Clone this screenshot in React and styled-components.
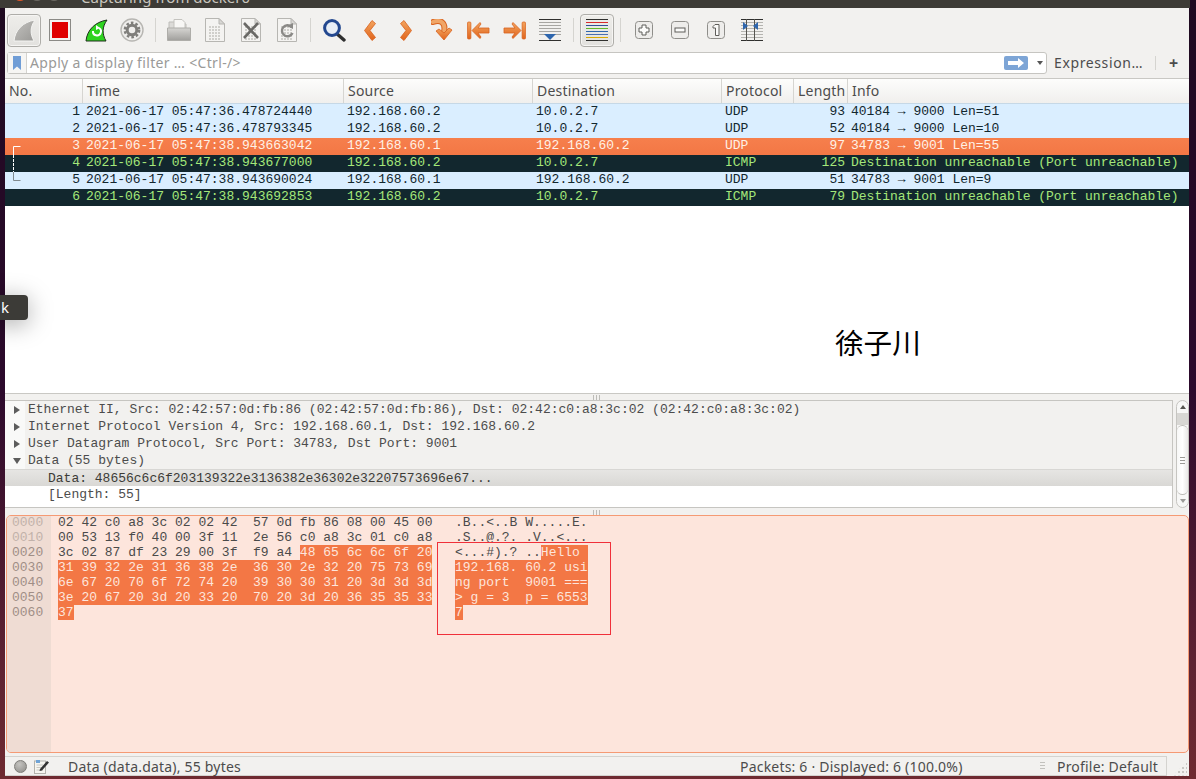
import React from 'react'
import styled, { createGlobalStyle, css } from 'styled-components'

const GlobalStyle = createGlobalStyle`
  html, body {
    margin: 0;
    padding: 0;
    overflow: hidden;
  }
`

const UI_FONT = `"Noto Sans", "Open Sans", sans-serif`
const MONO_FONT = `"Liberation Mono", "DejaVu Sans Mono", monospace`
const COLUMNS = '78px 261px 189px 189px 72px 54px 1fr'

const Desktop = styled.div`
  position: relative;
  width: 1196px;
  height: 779px;
  overflow: hidden;
  background: linear-gradient(180deg, #1e0a20 0%, #2c0a2c 50%, #5e2232 85%, #6e2a30 100%);
`

const TitleBar = styled.div`
  display: flex;
  align-items: flex-end;
  width: 1190px;
  height: 8px;
  overflow: hidden;
  background: #3d3b36;
`

const TitleInner = styled.div`
  display: flex;
  align-items: center;
  height: 20px;
  margin-bottom: 1px;
  padding-left: 13px;
  flex-shrink: 0;
`

const WinDot = styled.span`
  width: 14px;
  height: 14px;
  margin-right: 3px;
  margin-bottom: 6px;
  border-radius: 50%;
  background: ${p => (p.$close ? '#e2572a' : '#6b6963')};
`

const TitleText = styled.span`
  margin-left: 17px;
  font: 15px ${UI_FONT};
  color: #c9c6bf;
`

const Window = styled.div`
  display: flex;
  flex-direction: column;
  width: 1184px;
  height: 768px;
  margin-left: 5px;
  background: #f2f1ef;
  font-family: ${UI_FONT};
`

const Toolbar = styled.div`
  display: flex;
  align-items: center;
  gap: 2px;
  height: 44px;
  padding-left: 2px;
  flex-shrink: 0;
`

const ToolButton = styled.div`
  display: flex;
  align-items: center;
  justify-content: center;
  width: 34px;
  height: 33px;
  box-sizing: border-box;
  border-radius: 4px;
  ${p => p.$on && css`
    border: 1px solid #aeada9;
    background: linear-gradient(180deg, #eeedea, #e2e1de);
    box-shadow: inset 0 0 0 1px #f6f5f3;
  `}
`

const ToolSep = styled.div`
  width: 9px;
  height: 24px;
  background: linear-gradient(#d5d4d0, #d5d4d0) center / 1px 100% no-repeat;
`

const FilterRow = styled.div`
  display: flex;
  align-items: center;
  height: 22px;
  padding-left: 2px;
  flex-shrink: 0;
`

const FilterBox = styled.div`
  display: flex;
  align-items: center;
  width: 1040px;
  height: 22px;
  box-sizing: border-box;
  border: 1px solid #c6c5c1;
  border-radius: 3px;
  background: #fff;
`

const Bookmark = styled.div`
  display: flex;
  align-items: center;
  justify-content: center;
  width: 18px;
  height: 100%;
  border-right: 1px solid #d4d3cf;
  background: #f6f5f3;
`

const FilterHint = styled.span`
  flex: 1;
  padding: 0 0 2px 3px;
  font-size: 14px;
  letter-spacing: 0.33px;
  color: #9a9a98;
  white-space: nowrap;
`

const ApplyButton = styled.div`
  display: flex;
  align-items: center;
  justify-content: center;
  width: 24px;
  height: 14px;
  border-radius: 2px;
  background: #7da5d6;
`

const DropCaret = styled.span`
  width: 0;
  height: 0;
  margin: 0 3px 0 9px;
  border-left: 3.5px solid transparent;
  border-right: 3.5px solid transparent;
  border-top: 4px solid #555;
`

const ExpressionLabel = styled.span`
  width: 100px;
  margin-left: 7px;
  padding-bottom: 2px;
  font-size: 14px;
  letter-spacing: 0.62px;
  color: #4c4c4c;
  white-space: nowrap;
`

const FilterSep = styled.span`
  width: 1px;
  height: 14px;
  margin-left: 1px;
  background: #d5d4d0;
`

const PlusLabel = styled.span`
  margin-left: 13px;
  font-size: 16px;
  font-weight: 700;
  line-height: 1;
  color: #4c4c4c;
`

const PacketPane = styled.div`
  display: flex;
  flex-direction: column;
  height: 315px;
  margin-top: 4px;
  box-sizing: border-box;
  border-top: 1px solid #c9c8c4;
  background: #fff;
  flex-shrink: 0;
`

const HeaderRow = styled.div`
  display: grid;
  grid-template-columns: ${COLUMNS};
  height: 25px;
  box-sizing: border-box;
  border-bottom: 1px solid #c6d8e6;
  background: linear-gradient(180deg, #fdfdfc, #f0efed);
  flex-shrink: 0;
`

const HeaderCell = styled.div`
  padding: 1px 0 0 4px;
  border-right: 1px solid #d6d5d1;
  font-size: 14px;
  letter-spacing: 0.2px;
  line-height: 22px;
  color: #4c4c4c;
  overflow: hidden;
  white-space: nowrap;
  &:last-child {
    border-right: 0;
  }
`

const rowThemes = {
  plain: css`
    background: #daeeff;
    color: #12272e;
  `,
  error: css`
    background: linear-gradient(180deg, #f67f4c, #f37745);
    color: #fff1e6;
  `,
  dark: css`
    background: #12272e;
    color: #a5e87a;
  `
}

const PacketRow = styled.div`
  position: relative;
  display: grid;
  grid-template-columns: ${COLUMNS};
  height: 17px;
  font: 13px/15px ${MONO_FONT};
  white-space: pre;
  ${p => rowThemes[p.$kind]}
`

const Cell = styled.div`
  padding: 0 3px;
  overflow: hidden;
  text-align: ${p => (p.$right ? 'right' : 'left')};
`

const NoCell = styled(Cell)`
  padding: 0 3px 0 0;
  text-align: right;
`

const Relation = styled.svg`
  position: absolute;
  left: 8px;
  top: 0;
`

const Splitter = styled.div`
  display: flex;
  align-items: center;
  justify-content: center;
  height: 7px;
  flex-shrink: 0;
  border-top: 1px solid ${p => (p.$line ? '#c9c8c4' : 'transparent')};
  box-sizing: border-box;
`

const Grip = styled.span`
  width: 8px;
  height: 5px;
  background: repeating-linear-gradient(90deg, #bdbcb8 0 1px, transparent 1px 3px);
`

const TreeWrap = styled.div`
  display: flex;
  height: 108px;
  flex-shrink: 0;
`

const TreePane = styled.div`
  display: flex;
  flex-direction: column;
  width: 1169px;
  box-sizing: border-box;
  border: 1px solid #c6c5c1;
  border-left: 0;
  background: #fff;
  font: 13px/17px ${MONO_FONT};
  white-space: pre;
`

const TreeRow = styled.div`
  display: flex;
  align-items: center;
  height: 17px;
  flex-shrink: 0;
  color: #4c4c4c;
  background: linear-gradient(90deg, #f9f9f8 20px, #f2f1ef 20px);
  ${p => p.$selected && css`
    background: linear-gradient(180deg, #e6e5e3, #d9d8d5);
    color: #3c3b37;
    border-top: 1px solid #d8d7d4;
    box-sizing: border-box;
  `}
  ${p => p.$fill && css`
    flex: 1;
    align-items: flex-start;
    background: #fff;
  `}
`

const Caret = styled.span`
  display: block;
  width: 0;
  height: 0;
  margin-left: 9px;
  ${p => p.$open ? css`
    margin-left: 8px;
    margin-right: 7px;
    border-left: 4px solid transparent;
    border-right: 4px solid transparent;
    border-top: 6px solid #5c5c5c;
  ` : css`
    margin-right: 8px;
    border-top: 4px solid transparent;
    border-bottom: 4px solid transparent;
    border-left: 6px solid #5c5c5c;
  `}
`

const TreeChild = styled.span`
  padding-left: 43px;
`

const Scrollbar = styled.div`
  display: flex;
  flex-direction: column;
  align-items: center;
  width: 13px;
  margin-left: 3px;
  box-sizing: border-box;
  border: 1px solid #c6c5c1;
  border-radius: 7px;
  background: #f7f7f6;
  overflow: hidden;
`

const ArrowSlot = styled.div`
  display: flex;
  align-items: center;
  justify-content: center;
  height: ${p => p.$h}px;
  flex-shrink: 0;
`

const ScrollTriangle = styled.span`
  width: 0;
  height: 0;
  border-left: 3px solid transparent;
  border-right: 3px solid transparent;
  ${p => p.$down
    ? 'border-top: 4px solid #9b9b98;'
    : 'border-bottom: 4px solid #55544f;'}
`

const ScrollGutter = styled.div`
  width: 100%;
  height: 12px;
  flex-shrink: 0;
  background: #d8d7d4;
`

const ScrollThumb = styled.div`
  display: flex;
  align-items: center;
  justify-content: center;
  width: 100%;
  height: 70px;
  box-sizing: border-box;
  flex-shrink: 0;
  border: 1px solid #bcbbb7;
  border-left: 0;
  border-right: 0;
  border-radius: 6px;
  background: linear-gradient(90deg, #f7f7f6, #fff 50%, #e9e8e6);
`

const ThumbGrip = styled.span`
  width: 5px;
  height: 7px;
  background: repeating-linear-gradient(180deg, #9b9a96 0 1px, transparent 1px 3px);
`

const HexPane = styled.div`
  display: flex;
  height: 238px;
  margin-left: 1px;
  box-sizing: border-box;
  border: 1px solid #f59a74;
  border-radius: 5px;
  background: #fde5dc;
  overflow: hidden;
  font: 13px/15px ${MONO_FONT};
  white-space: pre;
  flex-shrink: 0;
`

const OffsetColumn = styled.div`
  width: 44px;
  padding-left: 5px;
  box-sizing: border-box;
  background: #efdcd3;
  flex-shrink: 0;
`

const OffsetLine = styled.div`
  height: 15px;
  margin-top: ${p => (p.$first ? '-1px' : 0)};
  color: ${p => (p.$dim ? '#c2b2aa' : '#a08e86')};
`

const HexColumn = styled.div`
  flex: 1;
  padding-left: 7px;
  margin-top: -1px;
  color: #4a4a4a;
`

const HexLine = styled.div`
  display: grid;
  grid-template-columns: 397px 1fr;
  height: 15px;
`

const Marked = styled.span`
  background: #f37745;
  color: #fde5dc;
`

const StatusBar = styled.div`
  display: flex;
  align-items: center;
  height: 20px;
  margin-top: 3px;
  flex-shrink: 0;
`

const StatusFrame = styled.div`
  display: flex;
  align-items: center;
  width: 1162px;
  height: 100%;
  box-sizing: border-box;
  border: 1px solid #d4d3cf;
  border-left: 0;
  font-size: 14px;
  letter-spacing: 0.2px;
  color: #4c4c4c;
  white-space: nowrap;
`

const Led = styled.span`
  width: 13px;
  height: 13px;
  margin-left: 9px;
  box-sizing: border-box;
  border: 1px solid #7e7d79;
  border-radius: 50%;
  background: radial-gradient(circle at 40% 30%, #c4c3c0, #8d8c88);
`

const NoteSlot = styled.span`
  display: flex;
  margin-left: 7px;
`

const StatusText = styled.span`
  width: ${p => p.$w}px;
  margin-left: ${p => p.$ml || 0}px;
`

const StatusGrip = styled.span`
  width: 5px;
  height: 8px;
  margin-left: 76px;
  margin-right: 12px;
  background: repeating-linear-gradient(180deg, #c2c1bd 0 1px, transparent 1px 3px);
`

const ResizeCorner = styled.span`
  width: 14px;
  height: 14px;
  margin: 5px 0 0 6px;
  background: radial-gradient(circle, #c9c8c4 1px, transparent 1.2px) 0 0 / 4px 4px;
  clip-path: polygon(100% 0, 100% 100%, 0 100%);
`

// things lying over the window
const Tooltip = styled.div`
  position: absolute;
  left: -8px;
  top: 295px;
  width: 36px;
  height: 25px;
  box-sizing: border-box;
  padding-left: 9px;
  border-radius: 4px;
  background: #3c3b37;
  color: #fff;
  font: 15px/24px ${UI_FONT};
  box-shadow: 0 4px 24px rgba(0, 0, 0, 0.35);
`

const SignName = styled.div`
  position: absolute;
  left: 835px;
  top: 322px;
  font: 28.6px/40px "Noto Sans CJK SC", sans-serif;
  color: #000;
`

const RedBox = styled.div`
  position: absolute;
  left: 437px;
  top: 542px;
  width: 174px;
  height: 93px;
  box-sizing: border-box;
  border: 1px solid #f0303a;
`

const Defs = styled.svg`
  position: absolute;
  width: 0;
  height: 0;
`

const GradientDefs = () => (
  <Defs>
    <defs>
      <linearGradient id="orange" x1="0" y1="0" x2="0" y2="1">
        <stop offset="0" stopColor="#f3a45e" />
        <stop offset="1" stopColor="#e0641c" />
      </linearGradient>
      <linearGradient id="fin" x1="0" y1="0" x2="1" y2="1">
        <stop offset="0" stopColor="#c4c3c0" />
        <stop offset="1" stopColor="#999895" />
      </linearGradient>
      <linearGradient id="folder" x1="0" y1="0" x2="0" y2="1">
        <stop offset="0" stopColor="#d6d5d2" />
        <stop offset="1" stopColor="#a09f9c" />
      </linearGradient>
    </defs>
  </Defs>
)

const FIN = 'M2 23 C3 12 11 4 23 2 C18 9 18 16 22 23 Z'

const SharkIcon = () => (
  <svg width="24" height="24" viewBox="0 0 24 24">
    <path d={FIN} fill="url(#fin)" stroke="#f4f4f2" strokeWidth="1" />
  </svg>
)

const StopIcon = () => (
  <svg width="22" height="22" viewBox="0 0 22 22">
    <rect x="0.5" y="0.5" width="21" height="21" fill="#f4f3f1" stroke="#8b8a86" />
    <rect x="3" y="3" width="16" height="16" fill="#e00000" />
  </svg>
)

const RestartIcon = () => (
  <svg width="24" height="24" viewBox="0 0 24 24">
    <path d={FIN} fill="#2ed320" stroke="#20301c" strokeWidth="1" />
    <path d="M9 13 A4 4 0 1 0 15 10" fill="none" stroke="#fff" strokeWidth="2" />
    <path d="M12 7 L16 10 L12 12 Z" fill="#fff" />
  </svg>
)

const GearIcon = () => (
  <svg width="24" height="24" viewBox="0 0 24 24">
    <circle cx="12" cy="12" r="11" fill="#efeeec" stroke="#b7b6b2" strokeWidth="1.4" />
    <circle cx="12" cy="12" r="7.2" fill="none" stroke="#7f7e7b" strokeWidth="2.4" strokeDasharray="2.6 2.05" />
    <circle cx="12" cy="12" r="4.8" fill="none" stroke="#7f7e7b" strokeWidth="3" />
  </svg>
)

const FolderIcon = () => (
  <svg width="24" height="22" viewBox="0 0 24 22">
    <path d="M2 3 H8 L10 5 H19 V12 H2 Z" fill="#dcdbd8" stroke="#bdbcb8" />
    <path d="M7 0.5 H15 L18 3.5 V11 H7 Z" fill="#f8f7f5" stroke="#c4c3bf" />
    <path d="M0.5 9 H23.5 V21.5 H0.5 Z" fill="url(#folder)" stroke="#aeada9" />
  </svg>
)

const Sheet = ({ children }) => (
  <svg width="20" height="24" viewBox="0 0 20 24">
    <path d="M0.5 0.5 H14 L19.5 6 V23.5 H0.5 Z" fill="#f4f3f1" stroke="#b7b6b2" />
    <path d="M14 0.5 V6 H19.5 Z" fill="#d8d7d4" stroke="#b7b6b2" />
    <path d="M4 9 H16 M4 12 H16 M4 15 H16 M4 18 H16 M4 21 H16" stroke="#c4c3bf" strokeWidth="1.5" strokeDasharray="2 1" />
    {children}
  </svg>
)

const FileIcon = () => <Sheet />

const CloseFileIcon = () => (
  <Sheet>
    <path d="M3 5 L17 20 M17 5 L3 20" stroke="#6a6966" strokeWidth="2.6" />
  </Sheet>
)

const ReloadFileIcon = () => (
  <Sheet>
    <path d="M14.5 9 A5.5 5.5 0 1 0 15.5 15" fill="none" stroke="#8a8986" strokeWidth="2.4" />
    <path d="M10 8 L16 5 L16 11 Z" fill="#8a8986" />
  </Sheet>
)

const SearchIcon = () => (
  <svg width="24" height="24" viewBox="0 0 24 24">
    <path d="M14 15 L22 22" stroke="#2f2f2f" strokeWidth="3.4" strokeLinecap="round" />
    <circle cx="10" cy="10" r="7.4" fill="#e8eef6" stroke="#23488f" strokeWidth="3" />
  </svg>
)

const ChevronLeft = () => (
  <svg width="12" height="21" viewBox="0 0 12 21">
    <path d="M8 0.5 L11.5 3.5 L6 10.5 L11.5 17.5 L8 20.5 L0.5 10.5 Z" fill="url(#orange)" stroke="#d8621e" strokeWidth="0.8" />
  </svg>
)

const ChevronRight = () => (
  <svg width="12" height="21" viewBox="0 0 12 21">
    <path d="M4 0.5 L0.5 3.5 L6 10.5 L0.5 17.5 L4 20.5 L11.5 10.5 Z" fill="url(#orange)" stroke="#d8621e" strokeWidth="0.8" />
  </svg>
)

const GoToIcon = () => (
  <svg width="22" height="22" viewBox="0 0 22 22">
    <path d="M2 3 C10 0 15 4 13 13" fill="none" stroke="#d8621e" strokeWidth="6" strokeLinecap="round" />
    <path d="M2 3 C10 0 15 4 13 13" fill="none" stroke="#f0a566" strokeWidth="4" strokeLinecap="round" />
    <path d="M5 12 L8 10 L13 14 L18 9 L21 11 L13 21 Z" fill="url(#orange)" stroke="#d8621e" strokeWidth="0.8" />
  </svg>
)

const FirstIcon = () => (
  <svg width="23" height="19" viewBox="0 0 23 19">
    <rect x="0.5" y="1" width="3.4" height="17" rx="1" fill="url(#orange)" stroke="#d8621e" strokeWidth="0.7" />
    <path d="M5 9.5 L13 1.5 L14 3 L11 7 H22 V12 H11 L14 16 L13 17.5 Z" fill="url(#orange)" stroke="#d8621e" strokeWidth="0.8" />
  </svg>
)

const LastIcon = () => (
  <svg width="23" height="19" viewBox="0 0 23 19">
    <rect x="19.1" y="1" width="3.4" height="17" rx="1" fill="url(#orange)" stroke="#d8621e" strokeWidth="0.7" />
    <path d="M18 9.5 L10 1.5 L9 3 L12 7 H1 V12 H12 L9 16 L10 17.5 Z" fill="url(#orange)" stroke="#d8621e" strokeWidth="0.8" />
  </svg>
)

const AutoScrollIcon = () => (
  <svg width="22" height="22" viewBox="0 0 22 22">
    <path d="M0 0.5 H22 M0 21.5 H22" stroke="#30302e" />
    <path d="M0 3.5 H22 M0 6.5 H22 M0 9.5 H22 M0 12.5 H22 M0 15.5 H22" stroke="#a7a6a2" />
    <path d="M5 15 H17 L11 21 Z" fill="#2f66ad" />
  </svg>
)

const ColorizeIcon = () => (
  <svg width="22" height="22" viewBox="0 0 22 22">
    <path d="M0 0.5 H22" stroke="#30302e" />
    <path d="M0 3.5 H22" stroke="#d82b2b" />
    <path d="M0 6.5 H22" stroke="#34509a" />
    <path d="M0 9.5 H22" stroke="#62b82c" />
    <path d="M0 12.5 H22" stroke="#2f66ad" />
    <path d="M0 15.5 H22" stroke="#4a6fb0" />
    <path d="M0 18.5 H22" stroke="#d9a800" />
    <path d="M0 21.5 H22" stroke="#30302e" />
  </svg>
)

const ZoomFrame = ({ children }) => (
  <svg width="18" height="18" viewBox="0 0 18 18">
    <rect x="0.5" y="0.5" width="17" height="17" rx="3" fill="#eeedeb" stroke="#8f8e8a" />
    {children}
  </svg>
)

const ZoomInIcon = () => (
  <ZoomFrame>
    <path d="M7 4 H11 V7 H14 V11 H11 V14 H7 V11 H4 V7 H7 Z" fill="#fbfbfa" stroke="#5f5e5a" />
  </ZoomFrame>
)

const ZoomOutIcon = () => (
  <ZoomFrame>
    <rect x="4" y="7" width="10" height="4" fill="#fbfbfa" stroke="#5f5e5a" />
  </ZoomFrame>
)

const ZoomNormalIcon = () => (
  <ZoomFrame>
    <path d="M8 3.5 H12 V14.5 H8.5 V7 H6 V5.5 Z" fill="#fbfbfa" stroke="#5f5e5a" />
  </ZoomFrame>
)

const ResizeColumnsIcon = () => (
  <svg width="22" height="22" viewBox="0 0 22 22">
    <path d="M0 0.5 H22 M0 21.5 H22" stroke="#30302e" />
    <path d="M0 3.5 H22 M0 6.5 H22 M0 9.5 H22 M0 12.5 H22 M0 15.5 H22 M0 18.5 H22" stroke="#b5b4b0" />
    <path d="M5.5 0 V22 M13.5 0 V22" stroke="#55544f" />
    <path d="M2 3 L7 7 L2 11 Z M17 3 L12 7 L17 11 Z" fill="#2f66ad" />
  </svg>
)

const BookmarkIcon = () => (
  <svg width="8" height="14" viewBox="0 0 8 14">
    <path d="M0 0 H8 V14 L4 10.5 L0 14 Z" fill="#709dd6" />
  </svg>
)

const ApplyArrow = () => (
  <svg width="16" height="10" viewBox="0 0 16 10">
    <path d="M0 3 H10 V0 L16 5 L10 10 V7 H0 Z" fill="#fff" />
  </svg>
)

const NoteIcon = () => (
  <svg width="15" height="15" viewBox="0 0 15 15">
    <rect x="0.5" y="2" width="11" height="12.5" fill="#f6f5f0" stroke="#b4b3ad" />
    <path d="M2.5 6 H9 M2.5 8.5 H9 M2.5 11 H9" stroke="#c9c8c2" />
    <path d="M6 10 L13 2 L15 3.5 L8 11.5 L5.5 12 Z" fill="#333" />
    <rect x="2" y="1" width="4" height="3" fill="#6fa3d6" />
  </svg>
)

const RelationTop = () => (
  <Relation width="10" height="17" viewBox="0 0 10 17">
    <path d="M7.5 8.5 H0.5 V17" fill="none" stroke="#fff" />
  </Relation>
)

const RelationMiddle = () => (
  <Relation width="10" height="17" viewBox="0 0 10 17">
    <path d="M0.5 0 V17" fill="none" stroke="#fff" strokeDasharray="3 1" />
  </Relation>
)

const RelationBottom = () => (
  <Relation width="10" height="17" viewBox="0 0 10 17">
    <path d="M0.5 0 V8.5 H7.5" fill="none" stroke="#808a90" />
  </Relation>
)

const packets = [
  { no: 1, time: '2021-06-17 05:47:36.478724440', src: '192.168.60.2', dst: '10.0.2.7', proto: 'UDP', len: 93, info: '40184 → 9000 Len=51', kind: 'plain' },
  { no: 2, time: '2021-06-17 05:47:36.478793345', src: '192.168.60.2', dst: '10.0.2.7', proto: 'UDP', len: 52, info: '40184 → 9000 Len=10', kind: 'plain' },
  { no: 3, time: '2021-06-17 05:47:38.943663042', src: '192.168.60.1', dst: '192.168.60.2', proto: 'UDP', len: 97, info: '34783 → 9001 Len=55', kind: 'error', relation: <RelationTop /> },
  { no: 4, time: '2021-06-17 05:47:38.943677000', src: '192.168.60.2', dst: '10.0.2.7', proto: 'ICMP', len: 125, info: 'Destination unreachable (Port unreachable)', kind: 'dark', relation: <RelationMiddle /> },
  { no: 5, time: '2021-06-17 05:47:38.943690024', src: '192.168.60.1', dst: '192.168.60.2', proto: 'UDP', len: 51, info: '34783 → 9001 Len=9', kind: 'plain', relation: <RelationBottom /> },
  { no: 6, time: '2021-06-17 05:47:38.943692853', src: '192.168.60.2', dst: '10.0.2.7', proto: 'ICMP', len: 79, info: 'Destination unreachable (Port unreachable)', kind: 'dark' }
]

const headers = ['No.', 'Time', 'Source', 'Destination', 'Protocol', 'Length', 'Info']

const treeRows = [
  'Ethernet II, Src: 02:42:57:0d:fb:86 (02:42:57:0d:fb:86), Dst: 02:42:c0:a8:3c:02 (02:42:c0:a8:3c:02)',
  'Internet Protocol Version 4, Src: 192.168.60.1, Dst: 192.168.60.2',
  'User Datagram Protocol, Src Port: 34783, Dst Port: 9001'
]

const offsets = ['0000', '0010', '0020', '0030', '0040', '0050', '0060']

function App() {
  return (
    <Desktop>
      <GlobalStyle />
      <GradientDefs />
      <TitleBar>
        <TitleInner>
          <WinDot $close />
          <WinDot />
          <WinDot />
          <TitleText>Capturing from docker0</TitleText>
        </TitleInner>
      </TitleBar>
      <Window>
        <Toolbar>
          <ToolButton $on><SharkIcon /></ToolButton>
          <ToolButton><StopIcon /></ToolButton>
          <ToolButton><RestartIcon /></ToolButton>
          <ToolButton><GearIcon /></ToolButton>
          <ToolSep />
          <ToolButton><FolderIcon /></ToolButton>
          <ToolButton><FileIcon /></ToolButton>
          <ToolButton><CloseFileIcon /></ToolButton>
          <ToolButton><ReloadFileIcon /></ToolButton>
          <ToolSep />
          <ToolButton><SearchIcon /></ToolButton>
          <ToolButton><ChevronLeft /></ToolButton>
          <ToolButton><ChevronRight /></ToolButton>
          <ToolButton><GoToIcon /></ToolButton>
          <ToolButton><FirstIcon /></ToolButton>
          <ToolButton><LastIcon /></ToolButton>
          <ToolButton><AutoScrollIcon /></ToolButton>
          <ToolSep />
          <ToolButton $on><ColorizeIcon /></ToolButton>
          <ToolSep />
          <ToolButton><ZoomInIcon /></ToolButton>
          <ToolButton><ZoomOutIcon /></ToolButton>
          <ToolButton><ZoomNormalIcon /></ToolButton>
          <ToolButton><ResizeColumnsIcon /></ToolButton>
        </Toolbar>
        <FilterRow>
          <FilterBox>
            <Bookmark><BookmarkIcon /></Bookmark>
            <FilterHint>Apply a display filter … &lt;Ctrl-/&gt;</FilterHint>
            <ApplyButton><ApplyArrow /></ApplyButton>
            <DropCaret />
          </FilterBox>
          <ExpressionLabel>Expression…</ExpressionLabel>
          <FilterSep />
          <PlusLabel>+</PlusLabel>
        </FilterRow>
        <PacketPane>
          <HeaderRow>
            {headers.map(h => <HeaderCell key={h}>{h}</HeaderCell>)}
          </HeaderRow>
          {packets.map(p => (
            <PacketRow key={p.no} $kind={p.kind}>
              {p.relation}
              <NoCell>{p.no}</NoCell>
              <Cell>{p.time}</Cell>
              <Cell>{p.src}</Cell>
              <Cell>{p.dst}</Cell>
              <Cell>{p.proto}</Cell>
              <Cell $right>{p.len}</Cell>
              <Cell>{p.info}</Cell>
            </PacketRow>
          ))}
        </PacketPane>
        <Splitter $line><Grip /></Splitter>
        <TreeWrap>
          <TreePane>
            {treeRows.map(text => (
              <TreeRow key={text}><Caret />{text}</TreeRow>
            ))}
            <TreeRow><Caret $open />Data (55 bytes)</TreeRow>
            <TreeRow $selected>
              <TreeChild>Data: 48656c6c6f203139322e3136382e36302e32207573696e67...</TreeChild>
            </TreeRow>
            <TreeRow $fill>
              <TreeChild>[Length: 55]</TreeChild>
            </TreeRow>
          </TreePane>
          <Scrollbar>
            <ArrowSlot $h={12}><ScrollTriangle /></ArrowSlot>
            <ScrollGutter />
            <ScrollThumb><ThumbGrip /></ScrollThumb>
            <ArrowSlot $h={11}><ScrollTriangle $down /></ArrowSlot>
          </Scrollbar>
        </TreeWrap>
        <Splitter><Grip /></Splitter>
        <HexPane>
          <OffsetColumn>
            {offsets.map((o, i) => (
              <OffsetLine key={o} $first={i === 0} $dim={i < 2}>{o}</OffsetLine>
            ))}
          </OffsetColumn>
          <HexColumn>
            <HexLine>
              <span>02 42 c0 a8 3c 02 02 42  57 0d fb 86 08 00 45 00</span>
              <span>.B..&lt;..B W.....E.</span>
            </HexLine>
            <HexLine>
              <span>00 53 13 f0 40 00 3f 11  2e 56 c0 a8 3c 01 c0 a8</span>
              <span>.S..@.?. .V..&lt;...</span>
            </HexLine>
            <HexLine>
              <span>3c 02 87 df 23 29 00 3f  f9 a4 <Marked>48 65 6c 6c 6f 20</Marked></span>
              <span>&lt;...#).? ..<Marked>Hello </Marked></span>
            </HexLine>
            <HexLine>
              <span><Marked>31 39 32 2e 31 36 38 2e  36 30 2e 32 20 75 73 69</Marked></span>
              <span><Marked>192.168. 60.2 usi</Marked></span>
            </HexLine>
            <HexLine>
              <span><Marked>6e 67 20 70 6f 72 74 20  39 30 30 31 20 3d 3d 3d</Marked></span>
              <span><Marked>ng port  9001 ===</Marked></span>
            </HexLine>
            <HexLine>
              <span><Marked>3e 20 67 20 3d 20 33 20  70 20 3d 20 36 35 35 33</Marked></span>
              <span><Marked>&gt; g = 3  p = 6553</Marked></span>
            </HexLine>
            <HexLine>
              <span><Marked>37</Marked></span>
              <span><Marked>7</Marked></span>
            </HexLine>
          </HexColumn>
        </HexPane>
        <StatusBar>
          <StatusFrame>
            <Led />
            <NoteSlot><NoteIcon /></NoteSlot>
            <StatusText $w={672} $ml={19}>Data (data.data), 55 bytes</StatusText>
            <StatusText $w={224}>Packets: 6 · Displayed: 6 (100.0%)</StatusText>
            <StatusGrip />
            <span>Profile: Default</span>
          </StatusFrame>
          <ResizeCorner />
        </StatusBar>
      </Window>
      <Tooltip>k</Tooltip>
      <SignName>徐子川</SignName>
      <RedBox />
    </Desktop>
  )
}

export default App
